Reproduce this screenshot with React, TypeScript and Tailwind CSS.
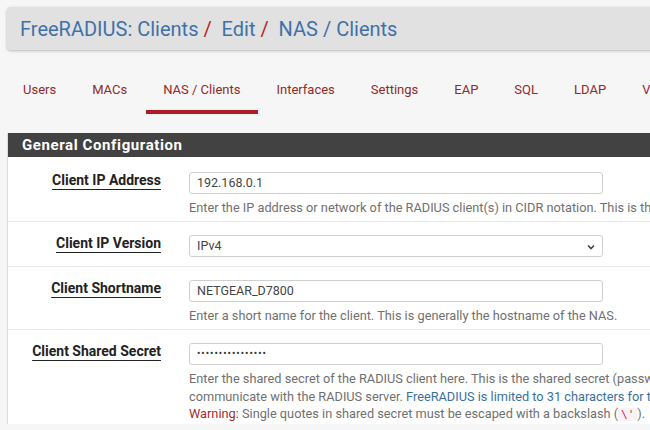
import React from 'react';

const tabs = ['Users', 'MACs', 'NAS / Clients', 'Interfaces', 'Settings', 'EAP', 'SQL', 'LDAP', 'View config'];

const Label: React.FC<{ text: string }> = ({ text }) => (
  <div className="w-[173px] shrink-0 -mt-[2px] pr-[20px] text-right text-[14px] leading-[20px]">
    <span className="font-bold text-[#222] underline underline-offset-[4px] decoration-[#222]">{text}</span>
  </div>
);

const Chevron = () => (
  <svg width="10" height="10" viewBox="0 0 10 10" className="absolute right-[6px] top-[6px]">
    <path d="M2 3.5 L5 6.5 L8 3.5" fill="none" stroke="#444" strokeWidth="1.6" />
  </svg>
);

const App: React.FC = () => {
  return (
    <div className="w-[650px] h-[430px] overflow-hidden bg-[#f6f6f6] font-['Roboto',sans-serif]">
      <div className="pt-[7px] pl-[7px]">
        <div className="h-[43px] w-[700px] rounded-l-[4px] bg-[#e1e1e1] shadow-[0_1px_3px_rgba(0,0,0,0.25)] flex items-center pl-[13px]">
          <span className="text-[20px] text-[#3f71a8] whitespace-nowrap">
            FreeRADIUS: Clients<span className="text-[#b72525]"> /</span>{'\u00a0 '}Edit<span className="text-[#b72525]"> /</span>{'\u00a0 '}NAS / Clients
          </span>
        </div>
      </div>

      <div className="flex h-[83px] items-start pt-[30px] pl-[23px] whitespace-nowrap">
        {tabs.map((t) => (
          <div key={t} className="relative mr-[36px] text-[13px] leading-[20px] text-[#8e2b2b]">
            {t}
            {t === 'NAS / Clients' && (
              <div className="absolute left-[-17px] right-[-18px] top-[30px] h-[4px] bg-[#b01c24]" />
            )}
          </div>
        ))}
      </div>

      <div className="ml-[7px] w-[700px] border-l border-[#dcdcdc] bg-white">
        <div className="h-[24px] bg-[#424242] pl-[14px] flex items-center">
          <span className="text-[15px] font-bold text-white tracking-[0.6px]">General Configuration</span>
        </div>

        <div className="flex border-b border-[#e6e6e6] pt-[15px] pb-[5px]">
          <Label text="Client IP Address" />
          <div className="pl-[8px]">
            <div className="h-[22px] w-[414px] rounded-[3px] border border-[#cfcfcf] bg-white px-[7px] text-[12.5px] leading-[20px] text-[#444]">192.168.0.1</div>
            <div className="mt-[5px] text-[12.75px] leading-[17px] text-[#707070] whitespace-nowrap">
              Enter the IP address or network of the RADIUS client(s) in CIDR notation. This is the IP of the NAS (switch, access point, firewall, router, etc.).
            </div>
          </div>
        </div>

        <div className="flex border-b border-[#e6e6e6] pt-[13px] pb-[9px]">
          <Label text="Client IP Version" />
          <div className="pl-[8px]">
            <div className="relative h-[22px] w-[414px] rounded-[3px] border border-[#cfcfcf] bg-white px-[7px] text-[12.5px] leading-[20px] text-[#444]">
              IPv4
              <Chevron />
            </div>
          </div>
        </div>

        <div className="flex border-b border-[#e6e6e6] pt-[13px] pb-[5px]">
          <Label text="Client Shortname" />
          <div className="pl-[8px]">
            <div className="h-[22px] w-[414px] rounded-[3px] border border-[#cfcfcf] bg-white px-[7px] text-[12.5px] leading-[20px] text-[#444]">NETGEAR_D7800</div>
            <div className="mt-[5px] text-[12.75px] leading-[17px] text-[#707070] whitespace-nowrap">
              Enter a short name for the client. This is generally the hostname of the NAS.
            </div>
          </div>
        </div>

        <div className="flex pt-[13px]">
          <Label text="Client Shared Secret" />
          <div className="pl-[8px]">
            <div className="h-[22px] w-[414px] rounded-[3px] border border-[#cfcfcf] bg-white px-[7px] text-[10px] leading-[19px] tracking-[1px] text-[#333]">
              ••••••••••••••••
            </div>
            <div className="mt-[5px] text-[12.75px] leading-[17.5px] text-[#707070] whitespace-nowrap">
              <div>Enter the shared secret of the RADIUS client here. This is the shared secret (password) which the NAS (switch or accesspoint) needs to</div>
              <div>
                communicate with the RADIUS server. <span className="text-[#3a6f9f]">FreeRADIUS is limited to 31 characters for the shared secret.</span>
              </div>
              <div>
                <span className="text-[#a52a2a]">Warning:</span> Single quotes in shared secret must be escaped with a backslash (
                <code className="rounded-[3px] bg-[#f9f2f4] px-[3px] font-['DejaVu_Sans_Mono',monospace] text-[11px] text-[#c7254e]">\'</code>
                ).
              </div>
            </div>
          </div>
        </div>
      </div>
    </div>
  );
};

export default App;
